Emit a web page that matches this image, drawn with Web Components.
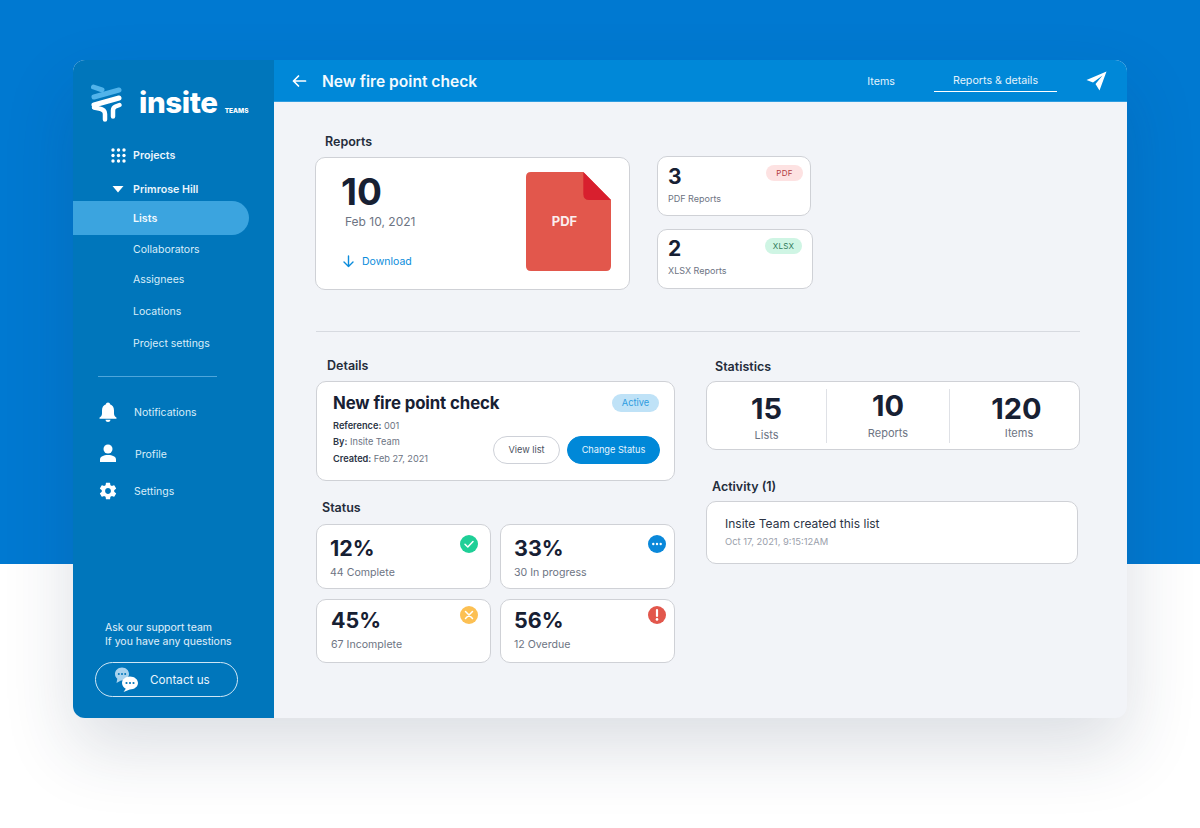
<!DOCTYPE html>
<html lang="en">
<head>
<meta charset="utf-8">
<title>Insite</title>
<style>
  html, body { margin: 0; height: 100%; }
  body {
    height: 828px;
    overflow: hidden;
    font-family: Inter, "Liberation Sans", sans-serif;
    background: linear-gradient(#0079d1 0, #0079d1 564px, #fff 564px);
  }
</style>
</head>
<body>
<app-window>
  <side-nav slot="side"></side-nav>
  <top-bar slot="top" heading="New fire point check"></top-bar>
  <report-panel></report-panel>
</app-window>

<script>
const CARD = `
  background: #fff;
  border: 1px solid #cfd1d6;
  border-radius: 10px;
  box-sizing: border-box;
`;

class AppWindow extends HTMLElement {
  constructor() {
    super();
    this.shadowDOM = this.attachShadow({ mode: "open" });
  }
  connectedCallback() {
    this.shadowDOM.innerHTML = `
    <style>
      :host {
        display: grid;
        grid-template-columns: 201px 1fr;
        grid-template-rows: 42px 1fr;
        width: 1054px;
        height: 658px;
        margin: 60px 0 0 73px;
        border-radius: 12px;
        overflow: hidden;
        background: #f2f4f8;
        box-shadow: 0 30px 70px rgba(30, 50, 80, .16);
      }
      .side { grid-row: 1 / 3; display: flex; }
    </style>
    <div class="side"><slot name="side"></slot></div>
    <slot name="top"></slot>
    <slot></slot>
    `;
  }
}

class SideNav extends HTMLElement {
  constructor() {
    super();
    this.shadowDOM = this.attachShadow({ mode: "open" });
  }
  connectedCallback() {
    this.shadowDOM.innerHTML = `
    <style>
      :host {
        display: flex;
        flex-direction: column;
        width: 201px;
        box-sizing: border-box;
        background: #0076bb;
        color: #fff;
      }
      .logo { display: flex; align-items: flex-start; height: 64px; padding: 23px 0 0 17px; box-sizing: border-box; }
      .logo svg { display: block; flex: none; }
      .word { font-size: 29.500px; font-weight: 800; line-height: 38px; margin: 0 0 0 15px; letter-spacing: -.4px; }
      .teams { font-size: 6.500px; font-weight: 800; margin: 24px 0 0 7px; line-height: 8px; }
      .top { display: flex; align-items: center; height: 16px; font-size: 10.700px; font-weight: 600; color: #eaf5fc; }
      .projects { margin-top: 23px; padding-left: 38px; gap: 7px; }
      .hill { margin-top: 18px; padding-left: 39px; gap: 9px; }
      .sub {
        display: flex; align-items: center;
        height: 34px; width: 176px;
        margin-top: 3px;
        padding-left: 60px; box-sizing: border-box;
        font-size: 10.500px;
        color: #d9edf9;
      }
      .sub.on {
        background: #3ba4df;
        border-radius: 0 17px 17px 0;
        font-weight: 600;
        font-size: 10.700px;
        color: #f1f9fe;
      }
      .sub.plain { height: 20px; margin-top: 0; }
      .rule { width: 119px; height: 1px; margin: 23px 0 0 25px; background: #4ea6db; }
      .main { display: flex; align-items: center; font-size: 10.500px; color: #d9edf9; }
      .main svg { width: 20px; height: 20px; margin-left: 25px; flex: none; }
      .contact {
        display: flex; align-items: center;
        width: 143px; height: 35px;
        margin: 13px 0 0 22px;
        box-sizing: border-box;
        border: 1px solid #cfe6f5;
        border-radius: 18px;
        font-size: 11.700px;
        color: #e8f4fb;
      }
      .contact svg { margin-left: 18px; flex: none; }
      .contact span { margin-left: 12px; }
      .ask { margin: auto 0 0 32px; font-size: 10.500px; line-height: 14px; color: #e1f0fa; }
    </style>
    <div class="logo">
      <svg width="34" height="40" viewBox="0 0 34 40" fill="none" stroke-linecap="round" stroke-linejoin="round">
        <path d="M3.500 4 L12 6.800" stroke="#51b3ea" stroke-width="5"/>
        <path d="M4 14 L29 7" stroke="#51b3ea" stroke-width="5"/>
        <path d="M4 22 L29 15" stroke="#fff" stroke-width="5"/>
        <path d="M4 24.500 L9 25.500 Q15 26.500 15 31 V36.500" stroke="#fff" stroke-width="4.500"/>
        <path d="M29.500 22 L25.500 23.500 Q23 24.500 23 27.500 V33.500" stroke="#fff" stroke-width="4.500"/>
      </svg>
      <div class="word">insite</div>
      <div class="teams">TEAMS</div>
    </div>
    <div class="top projects">
      <svg width="15" height="15" viewBox="0 0 15 15" fill="#fff">
        <circle cx="2" cy="2" r="1.700"/><circle cx="7.500" cy="2" r="1.700"/><circle cx="13" cy="2" r="1.700"/>
        <circle cx="2" cy="7.500" r="1.700"/><circle cx="7.500" cy="7.500" r="1.700"/><circle cx="13" cy="7.500" r="1.700"/>
        <circle cx="2" cy="13" r="1.700"/><circle cx="7.500" cy="13" r="1.700"/><circle cx="13" cy="13" r="1.700"/>
      </svg>
      Projects
    </div>
    <div class="top hill">
      <svg width="12" height="8" viewBox="0 0 12 8" fill="#fff"><path d="M0.500 1 H11.500 L6 7.500 Z"/></svg>
      Primrose Hill
    </div>
    <div class="sub on" style="margin-top:4px">Lists</div>
    <div class="sub plain" style="margin-top:4px">Collaborators</div>
    <div class="sub plain" style="margin-top:10px">Assignees</div>
    <div class="sub plain" style="margin-top:12px">Locations</div>
    <div class="sub plain" style="margin-top:12px">Project settings</div>
    <div class="rule"></div>
    <div class="main" style="margin-top:24px;height:22px">
      <svg viewBox="0 0 20 20" fill="#fff"><path d="M10 0.500 C11.200 0.500 12 1.300 12 2.300 C14.700 3.200 16 5.300 16 8.500 V11.500 C16 13.500 17 14.700 18.300 15.500 C18.800 15.900 18.600 16.800 17.900 16.800 H2.100 C1.400 16.800 1.200 15.900 1.700 15.500 C3 14.700 4 13.500 4 11.500 V8.500 C4 5.300 5.300 3.200 8 2.300 C8 1.300 8.800 0.500 10 0.500 Z M7.500 17.800 H12.500 C12.300 19.200 11.300 20 10 20 C8.700 20 7.700 19.200 7.500 17.800 Z"/></svg>
      <span style="margin-left:16px">Notifications</span>
    </div>
    <div class="main" style="margin-top:20px;height:22px">
      <svg viewBox="0 0 20 20" fill="#fff"><circle cx="10" cy="5" r="4.500"/><path d="M2 18 V15.500 C2 12.500 5.500 11 10 11 C14.500 11 18 12.500 18 15.500 V18 Z"/></svg>
      <span style="margin-left:17px">Profile</span>
    </div>
    <div class="main" style="margin-top:15px;height:22px">
      <svg viewBox="0 0 24 24" fill="#fff"><path d="M19.430 12.980c.04-.32.07-.64.07-.98s-.03-.66-.07-.98l2.110-1.650c.19-.15.240-.42.120-.64l-2-3.460c-.12-.22-.390-.3-.61-.22l-2.490 1c-.52-.4-1.080-.73-1.690-.98l-.38-2.650A.488.488 0 0 0 14 2h-4c-.25 0-.46.180-.49.420l-.38 2.650c-.61.250-1.170.590-1.690.98l-2.490-1c-.23-.09-.49 0-.61.220l-2 3.460c-.13.220-.07.490.12.640l2.110 1.650c-.04.320-.07.650-.07.980s.03.660.07.980l-2.110 1.650c-.19.150-.24.420-.12.640l2 3.460c.12.220.39.300.61.220l2.490-1c.52.400 1.080.730 1.690.980l.38 2.650c.03.240.240.420.49.420h4c.25 0 .46-.180.49-.420l.38-2.650c.61-.250 1.170-.590 1.690-.980l2.490 1c.23.090.49 0 .61-.220l2-3.460c.12-.220.070-.490-.12-.640l-2.110-1.650zM12 15.500c-1.930 0-3.500-1.570-3.500-3.500s1.570-3.500 3.500-3.500 3.500 1.570 3.500 3.500-1.570 3.500-3.500 3.500z"/></svg>
      <span style="margin-left:16px">Settings</span>
    </div>
    <div class="ask">Ask our support team<br>If you have any questions</div>
    <div class="contact" style="margin-bottom:21px">
      <svg width="24" height="27" viewBox="0 0 24 27">
        <path d="M8 1.500 C4.100 1.500 1 4.400 1 8 C1 9.900 1.900 11.600 3.300 12.800 L2.500 17 L7 14.500 C11 14.800 15 12 15 8 C15 4.400 11.900 1.500 8 1.500 Z" fill="#a9d3ee"/>
        <g fill="#0076bb"><circle cx="4.800" cy="8" r="1"/><circle cx="8" cy="8" r="1"/><circle cx="11.200" cy="8" r="1"/></g>
        <path d="M16 10.500 C11.600 10.500 8 13.400 8 17 C8 20 10.300 22 11.800 22.700 L9.500 26 L15.800 23.500 C20.400 23.500 24 20.600 24 17 C24 13.400 20.400 10.500 16 10.500 Z" fill="#fff"/>
        <g fill="#0076bb"><circle cx="12.500" cy="17" r="1.100"/><circle cx="16" cy="17" r="1.100"/><circle cx="19.500" cy="17" r="1.100"/></g>
      </svg>
      <span>Contact us</span>
    </div>
    `;
  }
}

class TopBar extends HTMLElement {
  constructor() {
    super();
    this.shadowDOM = this.attachShadow({ mode: "open" });
  }
  connectedCallback() {
    this.shadowDOM.innerHTML = `
    <style>
      :host {
        display: flex;
        align-items: center;
        height: 42px;
        box-sizing: border-box;
        background: #0088d8;
        border-bottom: 1px solid #2f9de0;
        color: #fff;
        padding-left: 18px;
      }
      svg { display: block; flex: none; }
      h1 { margin: 1px 0 0 15px; font-size: 15.600px; font-weight: 600; flex: 1; color: #f3fafe; }
      .tab { font-size: 10.700px; color: #e3f3fc; }
      .items { margin: 1px 39px 0 0; }
      .active { width: 123px; height: 42px; box-sizing: border-box; padding-top: 14px; text-align: center; position: relative; }
      .active::after { content: ""; position: absolute; left: 0; right: 0; bottom: 10px; height: 1px; background: #fff; }
      .send { margin: 0 19px 0 29px; }
    </style>
    <svg width="15" height="14" viewBox="0 0 15 14" fill="none" stroke="#fff" stroke-width="1.700" stroke-linecap="round" stroke-linejoin="round"><path d="M13.500 7 H1.500 M6.500 2 L1.500 7 L6.500 12"/></svg>
    <h1>${this.getAttribute("heading")}</h1>
    <div class="tab items">Items</div>
    <div class="tab active">Reports &amp; details</div>
    <svg class="send" width="22" height="20" viewBox="0 0 22 20" fill="#fff"><path d="M20.500 0.500 L0.500 9 L7 11.500 L16.500 4.500 L9.500 13 L13.500 19.500 Z"/></svg>
    `;
  }
}

class MiniReport extends HTMLElement {
  constructor() {
    super();
    this.shadowDOM = this.attachShadow({ mode: "open" });
  }
  connectedCallback() {
    const kind = this.getAttribute("kind");
    const tone = kind === "PDF" ? "background:#fde2e2;color:#b23a3f" : "background:#cff5e4;color:#2f7a5b;right:10px";
    this.shadowDOM.innerHTML = `
    <style>
      :host {
        display: block; position: relative;
        height: 60px; padding: ${kind === "PDF" ? 7 : 6}px 0 0 10px;
        ${CARD}
      }
      .n { font-size: 21px; font-weight: 700; line-height: 26px; color: #172033; }
      .l { margin-top: 3px; font-size: 9px; color: #6d7483; }
      .tag {
        position: absolute; top: 8px; right: 7px;
        width: 37px; height: 16px;
        border-radius: 8px;
        font-size: 8px; line-height: 16px; text-align: center;
        letter-spacing: .3px;
        ${tone}
      }
    </style>
    <div class="n">${this.getAttribute("count")}</div>
    <div class="l">${kind} Reports</div>
    <div class="tag">${kind}</div>
    `;
  }
}

class ReportCard extends HTMLElement {
  constructor() {
    super();
    this.shadowDOM = this.attachShadow({ mode: "open" });
  }
  connectedCallback() {
    this.shadowDOM.innerHTML = `
    <style>
      :host {
        display: flex; justify-content: space-between;
        height: 133px; padding: 14px 18px 0 25px;
        ${CARD}
      }
      .n { font-size: 37px; font-weight: 700; line-height: 40px; color: #172033; }
      .d { margin: 2px 0 0 4px; font-size: 12px; color: #6d7483; }
      .dl { display: flex; align-items: center; gap: 7px; margin: 26px 0 0 1px; font-size: 10.500px; color: #0a8cdb; }
      .pdf { position: relative; width: 85px; height: 99px; }
      .pdf svg { position: absolute; inset: 0; }
      .pdf span { position: absolute; left: 0; right: 8px; top: 41px; text-align: center; font-size: 13px; font-weight: 700; color: #fbeeee; }
    </style>
    <div>
      <div class="n">10</div>
      <div class="d">Feb 10, 2021</div>
      <div class="dl">
        <svg width="13" height="13" viewBox="0 0 13 13" fill="none" stroke="#0a8cdb" stroke-width="1.400" stroke-linecap="round" stroke-linejoin="round"><path d="M6.500 1 V11.500 M2 7 L6.500 11.500 L11 7"/></svg>
        Download
      </div>
    </div>
    <div class="pdf">
      <svg width="85" height="99" viewBox="0 0 86 99" preserveAspectRatio="none">
        <path d="M5 0 H58 L86 28 V94 Q86 99 81 99 H5 Q0 99 0 94 V5 Q0 0 5 0 Z" fill="#e2574c"/>
        <path d="M58 0 L86 28 H64 Q58 28 58 22 Z" fill="#d81f2e"/>
      </svg>
      <span>PDF</span>
    </div>
    `;
  }
}

class DetailCard extends HTMLElement {
  constructor() {
    super();
    this.shadowDOM = this.attachShadow({ mode: "open" });
  }
  connectedCallback() {
    this.shadowDOM.innerHTML = `
    <style>
      :host {
        display: block; position: relative;
        height: 100px; padding: 10px 0 0 16px;
        ${CARD}
      }
      h2 { margin: 0; font-size: 16.800px; font-weight: 700; line-height: 22px; color: #172033; letter-spacing: -.1px; }
      .rows { margin-top: 4px; font-size: 9.200px; line-height: 16.300px; color: #6d7483; }
      b { font-weight: 600; color: #2c3445; }
      .badge {
        position: absolute; top: 12px; right: 15px;
        width: 47px; height: 18px; border-radius: 9px;
        background: #bfe2f7; color: #2f9ce0;
        font-size: 9.300px; line-height: 18px; text-align: center;
      }
      .btns { position: absolute; right: 14px; top: 54px; display: flex; gap: 7px; }
      .btn {
        height: 28px; border-radius: 14px; box-sizing: border-box;
        font-size: 9.200px; line-height: 26px; text-align: center;
      }
      .ghost { width: 67px; border: 1px solid #ced1d8; color: #4a5160; background: #fff; }
      .solid { width: 93px; border: 1px solid #0088d8; color: #e6f5fd; background: #0088d8; }
    </style>
    <h2>New fire point check</h2>
    <div class="rows">
      <div><b>Reference:</b> 001</div>
      <div><b>By:</b> Insite Team</div>
      <div><b>Created:</b> Feb 27, 2021</div>
    </div>
    <div class="badge">Active</div>
    <div class="btns">
      <div class="btn ghost">View list</div>
      <div class="btn solid">Change Status</div>
    </div>
    `;
  }
}

const STATUS_ICONS = {
  done: `<circle cx="9" cy="9" r="9" fill="#1fcf97"/><path d="M5 9.300 L7.800 12 L13 6.500" fill="none" stroke="#fff" stroke-width="1.500" stroke-linecap="round" stroke-linejoin="round"/>`,
  busy: `<circle cx="9" cy="9" r="9" fill="#0a88da"/><g fill="#fff"><circle cx="5.300" cy="9" r="1.200"/><circle cx="9" cy="9" r="1.200"/><circle cx="12.700" cy="9" r="1.200"/></g>`,
  miss: `<circle cx="9" cy="9" r="9" fill="#fcc053"/><path d="M5.500 5.500 L12.500 12.500 M12.500 5.500 L5.500 12.500" stroke="#fff" stroke-width="1.500" stroke-linecap="round"/>`,
  late: `<circle cx="9" cy="9" r="9" fill="#e2574c"/><path d="M9 4 V10" stroke="#fff" stroke-width="2.200" stroke-linecap="round"/><circle cx="9" cy="13.400" r="1.300" fill="#fff"/>`
};

class StatusCard extends HTMLElement {
  constructor() {
    super();
    this.shadowDOM = this.attachShadow({ mode: "open" });
  }
  connectedCallback() {
    this.shadowDOM.innerHTML = `
    <style>
      :host {
        display: block; position: relative;
        height: 65px; padding: 10px 0 0 13px;
        ${CARD}
      }
      :host([low]) { height: 64px; padding: 7px 0 0 14px; }
      :host([right]) { padding-left: 13px; }
      .n { font-size: 21.500px; font-weight: 700; line-height: 26px; color: #172033; }
      .l { margin-top: 5px; font-size: 10.600px; color: #6d7483; }
      :host([low]) .l { margin-top: 5px; }
      svg { position: absolute; top: 10px; right: 12px; }
      :host([low]) svg { top: 6px; }
      :host([right]) svg { right: 8px; }
    </style>
    <div class="n">${this.getAttribute("pct")}</div>
    <div class="l">${this.getAttribute("label")}</div>
    <svg width="18" height="18" viewBox="0 0 18 18">${STATUS_ICONS[this.getAttribute("icon")]}</svg>
    `;
  }
}

class StatsCard extends HTMLElement {
  constructor() {
    super();
    this.shadowDOM = this.attachShadow({ mode: "open" });
  }
  connectedCallback() {
    this.shadowDOM.innerHTML = `
    <style>
      :host {
        display: grid; grid-template-columns: 119px 123px 1fr;
        height: 69px; align-items: center;
        ${CARD}
      }
      .c { height: 54px; text-align: center; box-sizing: border-box; padding-top: 4px; }
      .c + .c { border-left: 1px solid #dfe1e6; }
      .n { font-size: 29px; font-weight: 700; line-height: 32px; color: #172033; }
      .l { margin-top: 3px; font-size: 11px; color: #6d7483; }
    </style>
    <div class="c"><div class="n">15</div><div class="l">Lists</div></div>
    <div class="c"><div class="n" style="margin-top:-3px">10</div><div class="l" style="margin-top:4px">Reports</div></div>
    <div class="c"><div class="n" style="padding-left:4px">120</div><div class="l" style="margin-top:1px;padding-left:9px">Items</div></div>
    `;
  }
}

class ActivityCard extends HTMLElement {
  constructor() {
    super();
    this.shadowDOM = this.attachShadow({ mode: "open" });
  }
  connectedCallback() {
    this.shadowDOM.innerHTML = `
    <style>
      :host {
        display: block; width: 372px;
        height: 63px; padding: 14px 0 0 18px;
        ${CARD}
      }
      .t { font-size: 12px; line-height: 15px; color: #2c3445; }
      .d { margin-top: 5px; font-size: 9.400px; color: #9aa0ab; }
    </style>
    <div class="t">Insite Team created this list</div>
    <div class="d">Oct 17, 2021, 9:15:12AM</div>
    `;
  }
}

class SectionTitle extends HTMLElement {
  constructor() {
    super();
    this.shadowDOM = this.attachShadow({ mode: "open" });
  }
  connectedCallback() {
    this.shadowDOM.innerHTML = `
    <style>
      :host {
        display: block;
        height: 16px;
        font-size: 12.500px; font-weight: 600; line-height: 16px;
        color: #242c3b;
      }
    </style>
    <slot></slot>
    `;
  }
}

class ReportPanel extends HTMLElement {
  constructor() {
    super();
    this.shadowDOM = this.attachShadow({ mode: "open" });
  }
  connectedCallback() {
    this.shadowDOM.innerHTML = `
    <style>
      :host { display: block; padding: 32px 47px 0 41px; box-sizing: border-box; }
      .reports { display: flex; align-items: flex-start; margin-top: 6px; }
      .mains { width: 315px; margin-top: 1px; }
      .minis { display: flex; flex-direction: column; gap: 13px; width: 156px; margin-left: 27px; }
      hr { height: 1px; border: 0; margin: 41px 0 0 1px; background: #d7dae0; }
      .lower { display: grid; grid-template-columns: 359px 374px; column-gap: 31px; margin: 26px 0 0 1px; }
      .grid { display: grid; grid-template-columns: 175px 175px; column-gap: 9px; row-gap: 10px; margin-top: 8px; }
    </style>
    <section-title style="margin-left:10px">Reports</section-title>
    <div class="reports">
      <div class="mains"><report-card></report-card></div>
      <div class="minis">
        <mini-report kind="PDF" count="3" style="width:154px"></mini-report>
        <mini-report kind="XLSX" count="2"></mini-report>
      </div>
    </div>
    <hr>
    <div class="lower">
      <div>
        <section-title style="margin-left:11px">Details</section-title>
        <detail-card style="margin-top:7px"></detail-card>
        <section-title style="margin:19px 0 0 6px">Status</section-title>
        <div class="grid">
          <status-card pct="12%" label="44 Complete" icon="done"></status-card>
          <status-card pct="33%" label="30 In progress" icon="busy" right></status-card>
          <status-card pct="45%" label="67 Incomplete" icon="miss" low></status-card>
          <status-card pct="56%" label="12 Overdue" icon="late" low right></status-card>
        </div>
      </div>
      <div>
        <section-title style="margin:1px 0 0 9px">Statistics</section-title>
        <stats-card style="margin-top:6px"></stats-card>
        <section-title style="margin:29px 0 0 6px">Activity (1)</section-title>
        <activity-card style="margin-top:6px"></activity-card>
      </div>
    </div>
    `;
  }
}

customElements.define("app-window", AppWindow);
customElements.define("side-nav", SideNav);
customElements.define("top-bar", TopBar);
customElements.define("mini-report", MiniReport);
customElements.define("report-card", ReportCard);
customElements.define("detail-card", DetailCard);
customElements.define("status-card", StatusCard);
customElements.define("stats-card", StatsCard);
customElements.define("activity-card", ActivityCard);
customElements.define("section-title", SectionTitle);
customElements.define("report-panel", ReportPanel);
</script>
</body>
</html>
